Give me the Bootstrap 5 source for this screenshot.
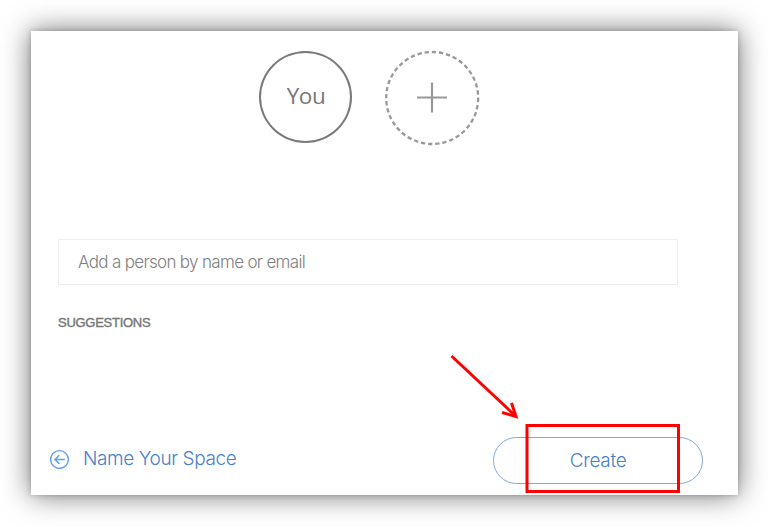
<!DOCTYPE html>
<html lang="en">
<head>
<meta charset="utf-8">
<meta name="viewport" content="width=device-width, initial-scale=1">
<title>Create a space</title>
<link href="https://cdn.jsdelivr.net/npm/bootstrap@5.3.0/dist/css/bootstrap.min.css" rel="stylesheet">
<style>
body{font-family:"Liberation Sans",Arial,sans-serif;background:#fff;padding:31px 30px 0 31px;height:527px;overflow:hidden}
.panel{width:707px;height:464px;background:#fff;box-shadow:0 0 5px rgba(0,0,0,.22),0 0 27px rgba(0,0,0,.56);padding:19px 27px 0}
.people{gap:33px;padding-left:201px;height:189px}
.you{width:93px;height:92px;border:2px solid #7a7a7a;color:#777;margin-top:1px}
.you span{font-family:"Open Sans","Liberation Sans",sans-serif;font-size:22.5px;letter-spacing:-.5px;line-height:24px;padding:0 0 2px 1px}
.person-field{width:620px;height:46px;border:1px solid #eee;padding:1px 19px 0;font-size:17px;color:#808080;white-space:nowrap}
.light-text{font-family:Inter,"Liberation Sans",sans-serif;font-weight:300}
.person-field span{letter-spacing:-.67px}
.section-label{font-size:13px;line-height:16px;color:#777;margin-top:30px;letter-spacing:-.27px;-webkit-text-stroke:.4px #777}
.actions{margin:106px -1px 0 -8px;height:47px}
.back{color:#4a80c8;font-size:19px;gap:13px;line-height:24px;margin-top:-4px;letter-spacing:-.4px}
.create{width:210px;height:47px;border:1px solid #86a8d8;color:#4a80c8;font-size:19px;letter-spacing:-.3px;margin-right:9px;padding:2px 0 0}
.create:hover{border-color:#5f8fce;color:#5f8fce}
.marker{left:0;top:0;pointer-events:none}
</style>
<script src="https://cdn.jsdelivr.net/npm/bootstrap@5.3.0/dist/js/bootstrap.bundle.min.js"></script>
</head>
<body class="position-relative">
<main class="panel d-flex flex-column">
  <div class="people d-flex align-items-start flex-shrink-0">
    <div class="you rounded-circle d-flex align-items-center justify-content-center"><span>You</span></div>
    <svg width="95" height="96" viewBox="0 0 95 96" role="img" aria-label="Add person" fill="none" stroke="#999">
      <circle cx="47.200" cy="48" r="46" stroke-width="2.3" stroke-dasharray="4.3 2.9"/>
      <path d="M32 47.500h30M47 32.500v30" stroke-width="2.2"/>
    </svg>
  </div>
  <div class="person-field light-text d-flex align-items-center flex-shrink-0"><span>Add a person by name or email</span></div>
  <div class="section-label"><span>SUGGESTIONS</span></div>
  <div class="actions d-flex align-items-center justify-content-between">
    <a href="#" class="back light-text d-flex align-items-center text-decoration-none">
      <svg width="20" height="20" viewBox="0 0 20 20" fill="none" stroke="#60a0f0" stroke-width="1.4">
        <circle cx="9.500" cy="10.500" r="8.9"/><path d="M14.800 10.500H5.600M9.300 6.200L5 10.500l4.300 4.300" stroke-width="1.6"/>
      </svg>
      <span>Name Your Space</span>
    </a>
    <button type="button" class="create light-text btn rounded-pill">Create</button>
  </div>
</main>
<svg class="marker position-absolute" width="768" height="527" fill="none" stroke="#f00" aria-hidden="true">
  <path d="M451.5 356L515 415.5" stroke-width="3"/>
  <path d="M511.5 403l4.5 13.5-14-4" stroke-width="3"/>
  <rect x="527" y="425.5" width="151.500" height="66" stroke-width="3"/>
</svg>
</body>
</html>
